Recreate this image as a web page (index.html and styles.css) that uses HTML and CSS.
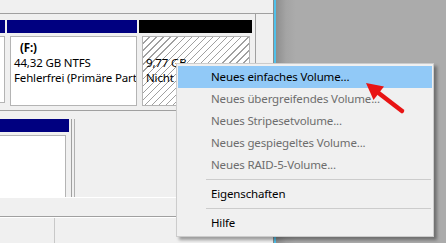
FILE: index.html
```html
<!DOCTYPE html>
<html lang="de">
<head>
<meta charset="utf-8">
<title>Datenträgerverwaltung</title>
<link rel="stylesheet" href="styles.css">
</head>
<body>
<div class="screen">
  <div class="window">
    <div class="toolbar"></div>
    <div class="disk-row disk-row-1">
      <div class="disk-area">
        <div class="part part-cut">
          <div class="bar bar-navy"></div>
          <div class="frame"><div class="box"></div></div>
        </div>
        <div class="part part-f">
          <div class="bar bar-navy"></div>
          <div class="frame">
            <div class="box">
              <div class="line line-name">(F:)</div>
              <div class="line">44,32 GB NTFS</div>
              <div class="line">Fehlerfrei (Primäre Partition)</div>
            </div>
          </div>
        </div>
        <div class="part part-free">
          <div class="bar bar-black"></div>
          <div class="frame">
            <div class="box box-hatch">
              <div class="line">&nbsp;</div>
              <div class="line"><span class="lbl">9,77 GB</span></div>
              <div class="line"><span class="lbl">Nicht zugeordnet</span></div>
            </div>
          </div>
        </div>
      </div>
    </div>
    <div class="disk-row disk-row-2">
      <div class="part part-low">
        <div class="bar bar-navy"></div>
        <div class="frame"><div class="box"></div></div>
      </div>
      <div class="low-rest"></div>
    </div>
    <div class="gap-row"></div>
    <div class="status-row">
      <div class="status-cell status-first"></div>
      <div class="status-cell"></div>
    </div>
  </div>
  <div class="accent"></div>
  <div class="desktop"></div>

  <div class="menu">
    <div class="item item-active">Neues einfaches Volume...</div>
    <div class="item item-disabled">Neues übergreifendes Volume...</div>
    <div class="item item-disabled">Neues Stripesetvolume...</div>
    <div class="item item-disabled">Neues gespiegeltes Volume...</div>
    <div class="item item-disabled">Neues RAID-5-Volume...</div>
    <div class="sep"></div>
    <div class="item">Eigenschaften</div>
    <div class="sep"></div>
    <div class="item">Hilfe</div>
  </div>

  <svg class="arrow" width="60" height="50" viewBox="0 0 60 50">
    <line x1="46" y1="38" x2="20" y2="18" stroke="#e81414" stroke-width="4.5" stroke-linecap="round"/>
    <polygon points="10,10 28,13.5 17.5,27" fill="#e81414"/>
  </svg>
</div>
</body>
</html>
```
FILE: styles.css
```css
html, body {
  margin: 0;
  padding: 0;
}
body {
  width: 446px;
  height: 243px;
  overflow: hidden;
  background: #f0f0f0;
  font-family: "Noto Sans", "Open Sans", sans-serif;
  font-size: 11.5px;
  letter-spacing: -0.15px;
  color: #000;
}
.screen {
  position: relative;
  display: flex;
  width: 446px;
  height: 243px;
}
.window {
  width: 273px;
  display: flex;
  flex-direction: column;
  background: #f0f0f0;
  border-right: 1px solid #8a8a8a;
}
.toolbar {
  height: 13px;
  border-bottom: 1px solid #a0a0a0;
}
.disk-row-1 {
  height: 96px;
  display: flex;
  border-bottom: 1px solid #a0a0a0;
}
.disk-area {
  width: 256px;
  border-right: 1px solid #a0a0a0;
  display: flex;
  gap: 2px;
  padding-top: 6px;
  box-sizing: border-box;
}
.part {
  display: flex;
  flex-direction: column;
}
.bar {
  height: 13px;
}
.bar-navy { background: #000080; }
.bar-black { background: #000; }
.frame {
  padding: 3px 0 3px 3px;
  background: #f0f0f0;
}
.box {
  background: #fff;
  border: 1px solid #b4b4b4;
  height: 65px;
  padding: 3px 0 0 3px;
  overflow: hidden;
  white-space: nowrap;
}
.part-cut { width: 5px; }
.part-cut .frame { padding: 3px 0 3px 0; }
.part-cut .box { border-left: none; padding: 0; }
.part-f { width: 130px; }
.part-free { width: 113px; }
.part-free .frame { padding: 3px 2px 3px 3px; }
.box-hatch {
  background: repeating-linear-gradient(135deg, #ffffff 0 4px, #a0a0a0 4px 5px);
}
.line {
  line-height: 15px;
  height: 15px;
}
.line-name {
  font-weight: bold;
  padding-left: 6px;
}
.disk-row-2 {
  height: 86px;
  display: flex;
  padding-top: 8px;
  box-sizing: border-box;
}
.part-low {
  width: 72px;
  border-right: 1px solid #a0a0a0;
  box-sizing: border-box;
}
.part-low .bar { width: 69px; }
.part-low .frame { padding: 3px 0 0 0; }
.part-low .box {
  width: 66px;
  height: 62px;
  padding: 0;
  border-left: none;
  border-bottom: none;
  box-sizing: border-box;
}
.low-rest {
  flex: 1;
  margin-left: 2px;
  border-left: 1px solid #b0b0b0;
}
.gap-row {
  height: 18px;
  border-top: 1px solid #ffffff;
  border-bottom: 1px solid #a0a0a0;
}
.status-row {
  flex: 1;
  display: flex;
  border-top: 1px solid #ffffff;
}
.status-first {
  width: 54px;
  border-right: 1px solid #c8c8c8;
}
.accent {
  width: 2px;
  background: #4fc1ea;
}
.desktop {
  flex: 1;
  background: linear-gradient(to right, #8e8e8e 0, #a4a4a4 10px, #ababab 20px, #ababab 100%);
}
.menu {
  position: absolute;
  left: 176px;
  top: 63px;
  width: 254px;
  padding: 2px 1px;
  background: #f0f0f0;
  border: 1px solid #cccccc;
  box-shadow: 3px 3px 3px rgba(0, 0, 0, 0.35);
}
.item {
  height: 22px;
  line-height: 22px;
  padding-left: 33px;
  white-space: nowrap;
}
.item-active {
  background: #91c9f7;
}
.item-disabled {
  color: #6d6d6d;
}
.sep {
  height: 1px;
  margin: 3px 1px 3px 28px;
  background: #cccccc;
}
.arrow {
  position: absolute;
  left: 356px;
  top: 73px;
}
```
